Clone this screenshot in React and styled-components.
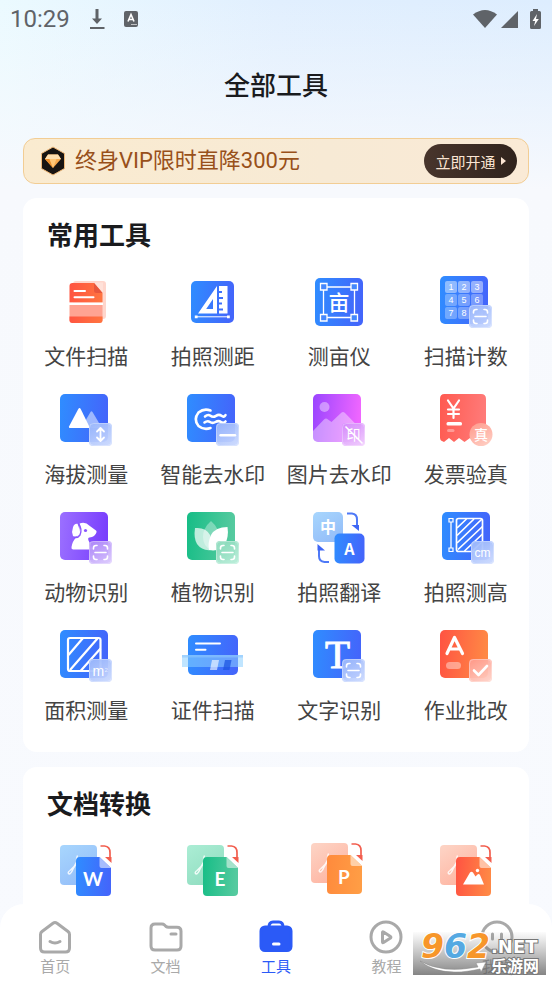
import React from "react";
import styled, { createGlobalStyle } from "styled-components";

const sans = `Roboto, "Noto Sans CJK SC", sans-serif`;
const cjk = `"Noto Sans CJK SC", sans-serif`;

const GlobalStyle = createGlobalStyle`
  * {
    box-sizing: border-box;
  }

  body {
    margin: 0;
    font-family: ${sans};
    background: #f8fafe;
  }

  button {
    padding: 0;
    border: 0;
    background: none;
    font-family: inherit;
    cursor: pointer;
  }
`;

/* ---------- shared gradients ---------- */

const gradients = [
  ["blue", "#2f8dff", "#4366fb"],
  ["purple", "#9b70ff", "#7a3ffd"],
  ["pink", "#9a45ff", "#ee66ff"],
  ["green", "#16bd86", "#55ca9f"],
  ["red", "#ff5a50", "#ff7a78"],
  ["orange", "#ff5342", "#ff8845"],
  ["amber", "#ff8a3c", "#ff9d45"],
  ["scan", "#ff5340", "#ff7340"],
];

const fades = [
  ["paleBlue", "#a6d4fd", "#93bcf8"],
  ["paleGreen", "#a9ecd3", "#8fdcbf"],
  ["paleRed", "#fdd2c3", "#feb29f"],
  ["badgeBlue", "#9db9fb", "#c8d7fe"],
  ["badgePurple", "#b18df8", "#d9c6fd"],
  ["badgeGreen", "#8adabb", "#b5ecd6"],
  ["badgePink", "#d58cfb", "#eec6fd"],
  ["badgeRed", "#ff9d8f", "#ffcfc4"],
];

const Gradients = () => {
  return <DefsSvg width="0" height="0" aria-hidden="true">
    <defs>
      {gradients.map(([id, from, to]) => (
        <linearGradient id={id} key={id} x1="0" y1="0" x2="1" y2="0.1">
          <stop offset="0" stopColor={from} />
          <stop offset="1" stopColor={to} />
        </linearGradient>
      ))}
      {fades.map(([id, from, to]) => (
        <linearGradient id={id} key={id} x1="0.2" y1="0" x2="0.8" y2="1">
          <stop offset="0" stopColor={from} />
          <stop offset="1" stopColor={to} />
        </linearGradient>
      ))}
    </defs>
  </DefsSvg>;
};

const DefsSvg = styled.svg`
  display: block;
`;

/* ---------- icon parts ---------- */

const Tile = ({ fill = "blue", x = 6, y = 2, size = 48 }) => (
  <rect x={x} y={y} width={size} height={size} rx="5" fill={`url(#${fill})`} />
);

const Badge = ({ fill = "badgeBlue", x = 35, y = 31, children }) => (
  <g transform={`translate(${x} ${y})`}>
    <rect width="23" height="23" rx="4" fill={`url(#${fill})`} fillOpacity="0.94" />
    <rect x="0.5" y="0.5" width="22" height="22" rx="4" fill="none" stroke="#fff" strokeOpacity="0.3" />
    {children}
  </g>
);

const ScanMark = () => (
  <path
    d="M4.5 8V7q0-2.500 2.500-2.500h1M15 4.500H16q2.500 0 2.500 2.500v1M18.500 15V16q0 2.500-2.500 2.500h-1M8 18.500H7q-2.500 0-2.500-2.500v-1M6 11.500h11"
    fill="none"
    stroke="#fff"
    strokeWidth="1.6"
    strokeLinecap="round"
  />
);

const FileScanIcon = () => (
  <>
    <rect x="19" y="7" width="33" height="38" rx="3" fill="#ffd6cc" />
    <path d="M18.500 9H40l8.500 10v9.700h-33V12q0-3 3-3z" fill="url(#scan)" />
    <path d="M40 9v7.500q0 2.500 2.500 2.500h6z" fill="#e8563c" />
    <path d="M40.500 8.500l8.500 10V8.500z" fill="#ffe1d9" />
    <path d="M15.500 31h33v15q0 3-3 3h-27q-3 0-3-3z" fill="#ffa392" />
    <path d="M15.500 42.500h33V46q0 3-3 3h-27q-3 0-3-3z" fill="url(#scan)" />
    <path d="M15 29.800h34" stroke="#fff" strokeWidth="2.400" />
    <path d="M20.500 17h10.500M20.500 23.200h19" stroke="#fff" strokeWidth="2" strokeLinecap="round" />
  </>
);

const RulerIcon = () => (
  <>
    <rect x="10" y="7" width="43" height="42" rx="5" fill="url(#blue)" />
    <path d="M36 12v27.500H17zM32 25v10h-6.800z" fill="#fff" fillRule="evenodd" />
    <path d="M38 12h8.500v27.500H38v-3h4v-2h-4v-4h3v-2h-3v-3.500h4v-2h-4v-4h3v-2h-3z" fill="#fff" />
    <path d="M15.500 42.800h32" stroke="#fff" strokeWidth="1" />
    <path d="M13.800 41.500h2.800v2.800h-2.800zM46 41.500h2.800v2.800H46z" fill="#fff" />
  </>
);

const MuIcon = () => (
  <>
    <Tile x={8} y={4} />
    <path d="M20 13h24M20 43.500h24M16.500 16v24M47.500 16v24" stroke="#fff" strokeWidth="1.300" />
    <path
      d="M13.500 9.500h6.500v6.500h-6.500zM44 9.500h6.500v6.500H44zM13.500 40.500h6.500v6.500h-6.500zM44 40.500h6.500v6.500H44z"
      fill="#4488fd"
      stroke="#fff"
      strokeWidth="1.300"
    />
    <text x="32" y="36" fontSize="21" fontWeight="500" fontFamily={cjk} fill="#fff" textAnchor="middle">亩</text>
  </>
);

const CountIcon = () => (
  <>
    <Tile />
    {["1", "2", "3", "4", "5", "6", "7", "8", ""].map((n, i) => {
      const x = 11 + (i % 3) * 13;
      const y = 7 + Math.floor(i / 3) * 13;
      return (
        <g key={i}>
          <rect x={x} y={y} width="12" height="12" rx="2" fill="#fff" fillOpacity={i < 3 ? 0.45 : 0.3} />
          <text x={x + 6} y={y + 9} fontSize="9" fontWeight="500" fontFamily={`"Liberation Sans", sans-serif`} fill="#fff" textAnchor="middle">{n}</text>
        </g>
      );
    })}
    <Badge><ScanMark /></Badge>
  </>
);

const AltitudeIcon = () => (
  <>
    <Tile />
    <path d="M27 36l9.500-16q1-1.500 2 0L48 36z" fill="#fff" fillOpacity="0.5" />
    <path d="M15 34.500l9.300-17.500q1.200-1.800 2.400 0L36 36H16q-1.500 0-1-1.500z" fill="#fff" />
    <Badge>
      <path d="M11.500 5.500v12M8 8.500l3.500-3.500L15 8.500M8 14.500l3.500 3.500 3.500-3.500" fill="none" stroke="#fff" strokeWidth="1.800" strokeLinecap="round" strokeLinejoin="round" />
    </Badge>
  </>
);

const SmartIcon = () => (
  <>
    <Tile />
    <g fill="none" stroke="#fff" strokeWidth="2.600" strokeLinecap="round">
      <path d="M29.500 18.500q-6.500-2.500-12 2-5.500 7 0 13.500 5.500 4.500 12 2" />
      <path d="M24 24.500q3-2.600 5.500-.7t5.500 0 5.500 0 4-.6M23.500 30.500q3-2.300 5.500-.5t5.500 0 5.500 0 4.500-.5" />
    </g>
    <Badge>
      <path d="M4.500 12.200h14.500" stroke="#fff" strokeWidth="2.400" strokeLinecap="round" />
    </Badge>
  </>
);

const PictureIcon = () => (
  <>
    <Tile fill="pink" />
    <circle cx="17.500" cy="15" r="5" fill="#fff" fillOpacity="0.4" />
    <path d="M6 39l11-11.500q2-1.800 4 0l3.500 2.500L34 21q2-1.800 4 0l16 16.500V45q0 5-5 5H11q-5 0-5-5z" fill="#fff" fillOpacity="0.4" />
    <Badge fill="badgePink">
      <text x="11.500" y="16.500" fontSize="14" fontFamily={cjk} fill="#fff" textAnchor="middle">印</text>
      <path d="M3.500 3.500l17 17" stroke="#fff" strokeWidth="1.600" />
    </Badge>
  </>
);

const InvoiceIcon = () => (
  <>
    <path d="M12 2h35q5 0 5 5v42l-5-3-5.500 4-5.500-4-5.500 4-5.500-4-5 4-5-4-5 4-3-1.500q-1-1-1-3V7q0-5 4.500-5z" fill="url(#red)" />
    <path d="M14 8.500l5.500 8 5.500-8M19.500 16.500V26M14 17.500h11M14 22h11" fill="none" stroke="#fff" strokeWidth="2.200" strokeLinecap="round" />
    <rect x="12.500" y="30" width="15.500" height="3.400" rx="1.500" fill="#fff" />
    <rect x="13" y="37" width="7.500" height="3" rx="1.500" fill="#fff" fillOpacity="0.35" />
    <circle cx="47" cy="42.500" r="11.500" fill="url(#badgeRed)" />
    <text x="47" y="47.500" fontSize="14" fontWeight="500" fontFamily={cjk} fill="#fff" textAnchor="middle">真</text>
  </>
);

const DogIcon = () => (
  <>
    <Tile fill="purple" />
    <path d="M25.500 13.500q6-2 10 2.200l6.500 4.800q.8.600.5 1.800-1.500 5-7 5.200-2 .2-1 3l4.500 9H19q-2-.2-1.500-2.500 1-6 5-10 4-5 3-15z" fill="#fff" />
    <path d="M23.500 13.700q-3.500-.5-4.500 3.500-1.800 4.500 0 8.800 3.500 1.500 6-1.500 1.500-4-1.500-10.800z" fill="#fff" />
    <path d="M24.500 13.500q4 6 1.500 11.500-2.200 3.300-6 2.500" fill="none" stroke="#8a55fe" strokeWidth="1.400" />
    <circle cx="31.500" cy="20.500" r="1.600" fill="#8a55fe" />
    <Badge fill="badgePurple"><ScanMark /></Badge>
  </>
);

const PlantIcon = () => (
  <>
    <Tile fill="green" />
    <path d="M30 11q8 7 8 16t-8 13q-8-4-8-13t8-16z" fill="#fff" fillOpacity="0.35" />
    <path d="M14 18q11-1 15 7 3 8 1 15-9 1-14-6-3.500-6-2-16z" fill="#fff" fillOpacity="0.7" />
    <path d="M46.500 17q-12 0-16.500 8-3.500 8-2 15 11 2 16-6 4-7 2.500-17z" fill="#fff" />
    <Badge fill="badgeGreen"><ScanMark /></Badge>
  </>
);

const TranslateIcon = () => (
  <>
    <Tile fill="paleBlue" size={30} />
    <text x="21" y="23" fontSize="16" fontWeight="700" fontFamily={cjk} fill="#fff" textAnchor="middle">中</text>
    <Tile x={27.500} y={23.500} size={30} />
    <text x="42.500" y="44.500" fontSize="16" fontWeight="700" fontFamily={cjk} fill="#fff" textAnchor="middle">A</text>
    <g fill="none" stroke="#4e79f7" strokeWidth="2">
      <path d="M40 3.500h5q5 .5 5 6V16" />
      <path d="M22 52h-4.500q-5.500-.5-5.500-6v-6" />
    </g>
    <path d="M44.500 15h7.500v6z" fill="#3f66f5" />
    <path d="M18 40.500h-7.500v-6.500z" fill="#3f66f5" />
  </>
);

const HeightIcon = () => (
  <>
    <Tile x={8} />
    <path d="M17 11v27" stroke="#fff" strokeWidth="1.300" />
    <path d="M15 8.500h4v3.500h-4zM15 38h4v3.500h-4z" fill="#3a86fe" stroke="#fff" strokeWidth="1.200" />
    <rect x="22.500" y="8.500" width="26" height="33" rx="2" fill="none" stroke="#fff" strokeWidth="1.700" />
    <path d="M23 18l9.500-9M23 25.500L40 9M23 33l25-24M24 39.500l24.500-23M30.500 41l18-17M38.500 41l10-9.500" stroke="#fff" strokeWidth="1.700" />
    <Badge x={37}>
      <text x="11.500" y="15.500" fontSize="12" fontFamily={`"Liberation Sans", sans-serif`} fill="#fff" textAnchor="middle">cm</text>
    </Badge>
  </>
);

const AreaIcon = () => (
  <>
    <Tile />
    <rect x="14" y="10" width="32.500" height="33" rx="2" fill="none" stroke="#fff" strokeWidth="2.200" />
    <path d="M14.500 27l14.500-17M16 42l27.500-31.500M26.500 43l20-22.500" stroke="#fff" strokeWidth="2.200" />
    <Badge>
      <text x="3.500" y="16.500" fontSize="14" fontFamily={`"Liberation Sans", sans-serif`} fill="#fff">m</text>
      <text x="15.500" y="12.500" fontSize="6" fontFamily={`"Liberation Sans", sans-serif`} fill="#fff" fillOpacity="0.7">2</text>
    </Badge>
  </>
);

const CardScanIcon = () => (
  <>
    <rect x="7" y="7" width="50" height="40" rx="5" fill="url(#blue)" />
    <path d="M15 15.500h24M15 21.700h9.500" stroke="#fff" strokeWidth="2" strokeLinecap="round" />
    <rect x="1" y="27" width="61" height="12" fill="#8cd0ff" fillOpacity="0.55" />
    <rect x="1" y="27" width="61" height="2.500" fill="#8cc6fd" fillOpacity="0.6" />
    <path d="M31 32h7l-2 10h-7z" fill="#fff" fillOpacity="0.6" />
    <path d="M44 32h6.500l-2 10H42z" fill="#1d55e2" fillOpacity="0.75" />
  </>
);

const TextIcon = () => (
  <>
    <Tile />
    <text x="30.500" y="40" fontSize="41" fontFamily={`"Liberation Serif", serif`} fill="#fff" stroke="#fff" strokeWidth="1" textAnchor="middle">T</text>
    <Badge><ScanMark /></Badge>
  </>
);

const HomeworkIcon = () => (
  <>
    <Tile fill="orange" />
    <path d="M13 25.500L20.500 9.500 28.500 25.500M15.500 21h10" fill="none" stroke="#fff" strokeWidth="3.200" strokeLinecap="round" strokeLinejoin="round" />
    <rect x="12" y="34" width="15" height="7" rx="3.500" fill="#fff" fillOpacity="0.4" />
    <Badge fill="badgeRed">
      <path d="M5 11.500l4.500 4.500 8.500-9" fill="none" stroke="#fff" strokeWidth="2.600" strokeLinecap="round" strokeLinejoin="round" />
    </Badge>
  </>
);

const ConvertIcon = ({ back, front, fold, letter, dx = 0, dy = 0 }) => (
  <g transform={`translate(${dx} ${dy})`}>
    <rect x="6" y="2" width="37" height="40" rx="4" fill={`url(#${back})`} />
    <path d="M23.500 12.500q-1.500 3-.5 6-2 5-7 9-3 2-1 3.500 2 0 4-5 2-4 5-6" fill="none" stroke="#fff" strokeWidth="1.500" strokeOpacity="0.85" />
    <path d="M26 14h19.500l11.500 11v24q0 4-4 4H26q-4 0-4-4V18q0-4 4-4z" fill={`url(#${front})`} />
    <path d="M45.500 14l11.500 11H47.500q-2 0-2-2z" fill={fold} />
    <path d="M46.500 3h4q5.500.5 5.500 6.500v5" fill="none" stroke="#f25e4e" strokeWidth="1.700" />
    <path d="M51 14h6.500v6z" fill="#f25e4e" />
    {letter ? (
      <text x="39" y="43" fontSize="19" fontWeight="700" fontFamily={`Lato, ${sans}`} fill="#fff" textAnchor="middle">{letter}</text>
    ) : (
      <>
        <path d="M29 41.500l7-12q1.500-1.500 3 0l2.500 4 2-2q1.500-1 2.500.500l4 9.500z" fill="#fff" />
        <circle cx="43.500" cy="27.500" r="1.700" fill="#fff" />
      </>
    )}
  </g>
);

const commonTools = [
  ["文件扫描", FileScanIcon],
  ["拍照测距", RulerIcon],
  ["测亩仪", MuIcon],
  ["扫描计数", CountIcon],
  ["海拔测量", AltitudeIcon],
  ["智能去水印", SmartIcon],
  ["图片去水印", PictureIcon],
  ["发票验真", InvoiceIcon],
  ["动物识别", DogIcon],
  ["植物识别", PlantIcon],
  ["拍照翻译", TranslateIcon],
  ["拍照测高", HeightIcon],
  ["面积测量", AreaIcon],
  ["证件扫描", CardScanIcon],
  ["文字识别", TextIcon],
  ["作业批改", HomeworkIcon],
];

const converters = [
  { letter: "W", back: "paleBlue", front: "blue", fold: "#a7bdfd" },
  { letter: "E", back: "paleGreen", front: "green", fold: "#a5e2cb" },
  { letter: "P", back: "paleRed", front: "amber", fold: "#ffd0a8", dx: -2, dy: -2 },
  { letter: "", back: "paleRed", front: "orange", fold: "#ffc2a6" },
];

/* ---------- page parts ---------- */

const StatusBar = () => {
  return <Status>
    <Clock>10:29</Clock>
    <svg width="16" height="20" viewBox="0 0 16 20" fill="#5f6368">
      <path d="M6.500 0h3v9.500H13L8 15 3 9.500h3.500zM1 18h14.500v2H1z" />
    </svg>
    <svg width="14" height="16" viewBox="0 0 14 16">
      <rect width="14" height="16" rx="2" fill="#5f6368" />
      <path d="M4 10.500L7 3.500l3 7M5 8.500h4" fill="none" stroke="#fff" strokeWidth="1.600" />
      <path d="M7 13.500h6" stroke="#fff" strokeOpacity="0.6" strokeWidth="1" />
    </svg>
    <StatusRight>
      <svg width="24" height="18" viewBox="0 0 24 18" fill="#5f6368">
        <path d="M0 4.500Q12-4.500 24 4.500L12 18z" />
      </svg>
      <svg width="17" height="17" viewBox="0 0 17 17" fill="#5f6368">
        <path d="M17 0v17H0z" />
      </svg>
      <svg width="11" height="20" viewBox="0 0 11 20">
        <path d="M3 0h5v2h1.500q1.500 0 1.500 1.500v15q0 1.500-1.500 1.500h-8Q0 20 0 18.500v-15Q0 2 1.500 2H3z" fill="#5f6368" />
        <path d="M7 5L2.500 12h2.700L4 17l4.800-7H6z" fill="#fff" />
      </svg>
    </StatusRight>
  </Status>;
};

const VipBanner = () => {
  return <Banner>
    <svg width="26" height="30" viewBox="0 0 26 30" aria-hidden="true">
      <path d="M13 1l11.500 6.500v15L13 29 1.500 22.500v-15z" fill="#171412" stroke="#efb878" strokeWidth="1" />
      <path d="M8 8.500h10l3 4.500-8 9-8-9z" fill="#f7a94e" />
      <path d="M8 8.500h10l3 4.500H5z" fill="#ffe0b0" />
      <path d="M5 13h4.500l3.500 9z" fill="#e98d2c" />
      <path d="M9.500 13h7L13 22z" fill="#ffc777" />
    </svg>
    <BannerText>终身VIP限时直降300元</BannerText>
    <OpenButton type="button">
      立即开通
      <svg width="5" height="8" viewBox="0 0 5 8" fill="#fbe5d3"><path d="M0 0l5 4-5 4z" /></svg>
    </OpenButton>
  </Banner>;
};

const navItems = [
  ["首页", <path d="M18 3.500q1 0 2 .7l11 8.300q1.500 1.200 1.500 3V29q0 4-4 4h-21q-4 0-4-4V15.500q0-1.800 1.500-3l11-8.300q1-.7 2-.7zM13 22.500q5 3 10 0" />],
  ["文档", <path d="M7 5h7q1.500 0 2.500 1l1.500 1.500q1 .8 2.500.8H29q4 0 4 4V27q0 4-4 4H7q-4 0-4-4V9q0-4 4-4zM23 15h5" />],
  ["工具", (
    <>
      <path d="M11 8q0-5 4-5h6q4 0 4 5" />
      <rect x="3" y="8" width="30" height="23.500" rx="4" fill="#2b5af7" />
      <path d="M15.500 25h5.500" stroke="#fff" />
    </>
  )],
  ["教程", <path d="M18 3a15 15 0 1 1 0 30 15 15 0 0 1 0-30zM14.500 13.500v9.500q0 1 1 .5l7-4.500q.8-.7 0-1.400l-7-4.600q-1-.5-1 .5z" />],
  ["我的", <path d="M18 3a15 15 0 1 1 0 30 15 15 0 0 1 0-30zM13.500 15v5M22.500 15v5" />],
];

const Watermark = () => {
  return <Mark viewBox="0 0 133 43" role="img" aria-label="962.NET 乐游网">
    <defs>
      <linearGradient id="markShade" x1="0" y1="0" x2="0" y2="1">
        <stop offset="0" stopColor="#666" stopOpacity="0.02" />
        <stop offset="1" stopColor="#555" stopOpacity="0.72" />
      </linearGradient>
    </defs>
    <rect width="133" height="43" fill="url(#markShade)" />
    <g fontFamily={`"DejaVu Sans", sans-serif`} fontWeight="700" paintOrder="stroke" stroke="#fff" strokeWidth="2">
      <g fontSize="33" fontStyle="italic">
        <text x="8" y="26" fill="#f7962a">9</text>
        <text x="31" y="26" fill="#55a9e2">6</text>
        <text x="54" y="26" fill="#f7962a">2</text>
      </g>
      <text x="78" y="21" fontSize="18" fill="#fff" stroke="#777">.NET</text>
      <text x="78" y="40" fontSize="16" fontFamily={cjk} fill="#fff" stroke="#777">乐游网</text>
    </g>
    <path d="M7 29q22 13 58 6l-2-4 10-1-5 10-1-3Q28 46 7 29z" fill="#fff" stroke="#888" strokeWidth="0.500" />
  </Mark>;
};

const App = () => {
  return <Screen>
    <GlobalStyle />
    <Gradients />
    <Content>
      <StatusBar />
      <PageTitle>全部工具</PageTitle>
      <VipBanner />
      <Section>
        <SectionTitle>常用工具</SectionTitle>
        <ToolGrid>
          {commonTools.map(([name, Icon]) => (
            <Tool type="button" key={name}>
              <ToolIcon viewBox="0 0 64 56" aria-hidden="true"><Icon /></ToolIcon>
              <ToolName>{name}</ToolName>
            </Tool>
          ))}
        </ToolGrid>
      </Section>
      <Section>
        <SectionTitle>文档转换</SectionTitle>
        <ToolGrid>
          {converters.map((item) => (
            <Tool type="button" key={item.front}>
              <ToolIcon viewBox="0 0 64 56" aria-hidden="true"><ConvertIcon {...item} /></ToolIcon>
            </Tool>
          ))}
        </ToolGrid>
      </Section>
    </Content>
    <NavBar>
      {navItems.map(([name, icon]) => (
        <NavLink href="#" key={name} $active={name === "工具"}>
          <NavIcon viewBox="0 0 36 36" aria-hidden="true">{icon}</NavIcon>
          {name}
        </NavLink>
      ))}
      <Watermark />
    </NavBar>
  </Screen>;
};

const Screen = styled.div`
  display: flex;
  flex-direction: column;
  height: 100vh;
  background:
    linear-gradient(180deg, rgba(247, 249, 253, 0) 0, #f7f9fd 190px, #f8fafe 100%),
    linear-gradient(90deg, #ebfaff 0, #e1effe 50%, #ddedfe 100%);
`;

const Content = styled.main`
  flex: 1;
  min-height: 0;
  overflow-y: auto;
  scrollbar-width: none;
`;

const Status = styled.header`
  display: flex;
  align-items: center;
  height: 38px;
  padding: 0 11px 0 10px;
  gap: 19px;
`;

const Clock = styled.time`
  font-size: 24px;
  line-height: 38px;
  color: #5f6368;
`;

const StatusRight = styled.div`
  display: flex;
  align-items: center;
  gap: 4px;
  margin-left: auto;

  svg:last-child {
    margin-left: 8px;
  }
`;

const PageTitle = styled.h1`
  margin: 28px 0 32px;
  font-size: 26px;
  font-weight: 500;
  line-height: 40px;
  text-align: center;
  color: #1a1b1e;
`;

const Banner = styled.div`
  display: flex;
  align-items: center;
  height: 46px;
  margin: 0 23px 14px;
  padding: 0 11px 0 16px;
  border: 1px solid #f2cd94;
  border-radius: 12px;
  background: linear-gradient(90deg, #faebd0, #f7ead5 60%, #faead6);
`;

const BannerText = styled.span`
  margin-left: 9px;
  font-size: 22px;
  line-height: 32px;
  color: #98501a;
`;

const OpenButton = styled.button`
  && {
    display: flex;
    align-items: center;
    justify-content: center;
    gap: 5px;
    width: 93px;
    height: 34px;
    margin-left: auto;
    border-radius: 17px;
    background: linear-gradient(90deg, #48352c, #30231d);
    font-size: 15px;
    color: #fbe5d3;
  }
`;

const Section = styled.section`
  margin: 0 23px 15px;
  padding: 18px 0 27px;
  border-radius: 14px;
  background: #fff;
`;

const SectionTitle = styled.h2`
  margin: 0 0 18px;
  padding-left: 24px;
  font-size: 26px;
  font-weight: 700;
  line-height: 40px;
  color: #1a1b1e;
`;

const ToolGrid = styled.div`
  display: grid;
  grid-template-columns: repeat(4, 1fr);
  row-gap: 21px;
`;

const Tool = styled.button`
  display: flex;
  flex-direction: column;
  align-items: center;
  gap: 13px;
`;

const ToolIcon = styled.svg`
  width: 64px;
  height: 56px;
`;

const ToolName = styled.span`
  font-size: 21px;
  line-height: 28px;
  white-space: nowrap;
  color: #444;
`;

const NavBar = styled.nav`
  position: relative;
  display: grid;
  grid-template-columns: repeat(5, 1fr);
  margin-top: -24px;
  padding: 15px 0 4px;
  border-radius: 24px 24px 0 0;
  background: #fff;
`;

const NavLink = styled.a`
  display: flex;
  flex-direction: column;
  align-items: center;
  gap: 2px;
  font-size: 15px;
  line-height: 20px;
  text-decoration: none;
  color: ${({ $active }) => ($active ? "#2b5af7" : "#a9a9a9")};
`;

const NavIcon = styled.svg`
  width: 36px;
  height: 36px;
  fill: none;
  stroke: currentColor;
  stroke-width: 3;
  stroke-linecap: round;
  stroke-linejoin: round;
`;

const Mark = styled.svg`
  position: absolute;
  right: 6px;
  bottom: 6px;
  width: 133px;
  height: 43px;
  overflow: visible;
`;

export default App;
